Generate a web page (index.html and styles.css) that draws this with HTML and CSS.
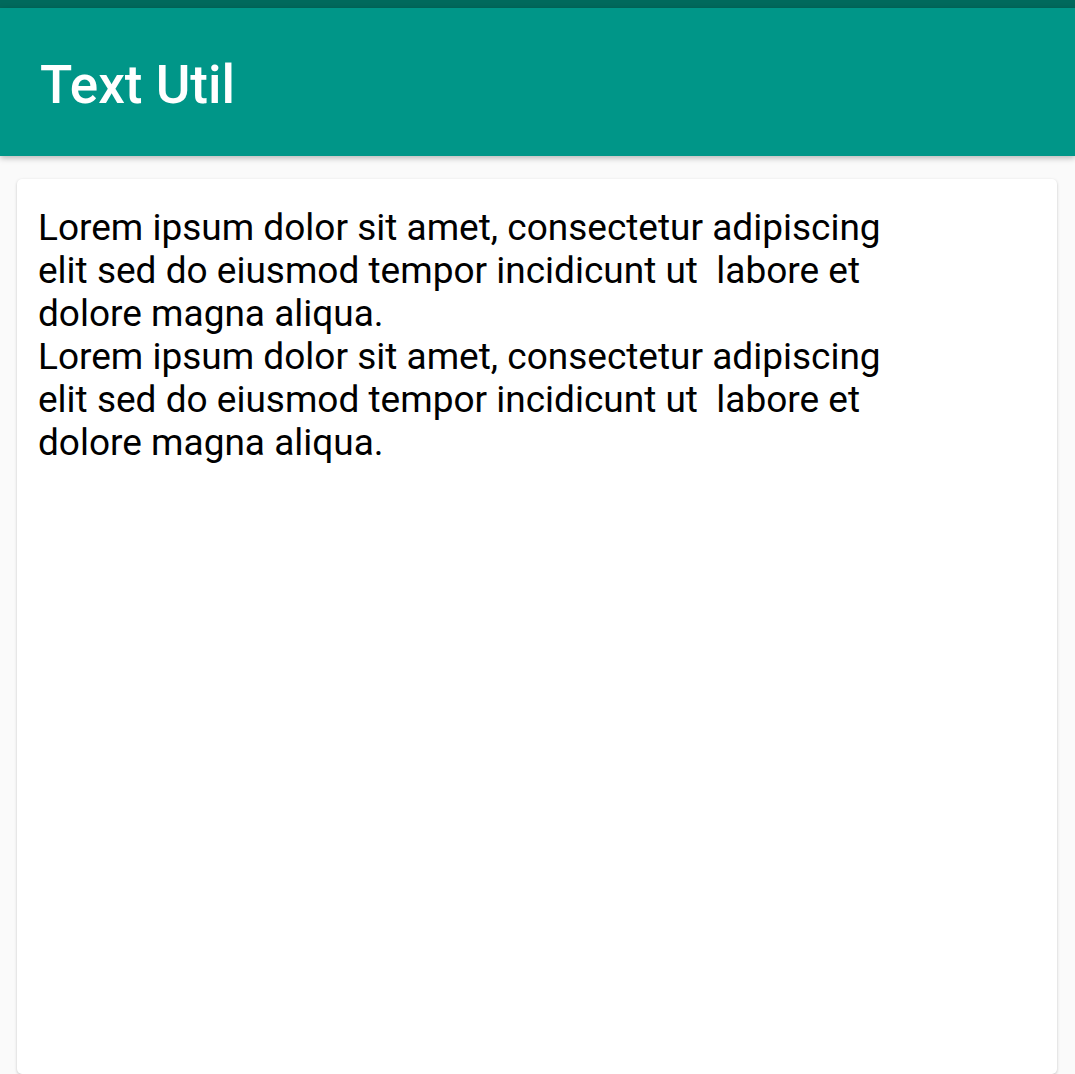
FILE: index.html
```html
<!DOCTYPE html>
<html>
<head>
<meta charset="utf-8">
<link rel="stylesheet" href="styles.css">
</head>
<body>
<div class="status"></div>
<header class="appbar"><h1 class="title">Text Util</h1></header>
<main class="content">
<div class="card"><p class="text">Lorem ipsum dolor sit amet, consectetur adipiscing
elit sed do eiusmod tempor incidicunt ut  labore et
dolore magna aliqua.
Lorem ipsum dolor sit amet, consectetur adipiscing
elit sed do eiusmod tempor incidicunt ut  labore et
dolore magna aliqua.</p></div>
</main>
</body>
</html>
```
FILE: styles.css
```css
html, body {
  margin: 0;
  padding: 0;
  height: 100%;
  overflow: hidden;
}
body {
  background: #fafafa;
  font-family: Roboto, "Liberation Sans", sans-serif;
  display: flex;
  flex-direction: column;
}
.status {
  height: 8px;
  background: #00695c;
  flex: none;
}
.appbar {
  height: 148px;
  box-sizing: border-box;
  background: #009688;
  box-shadow: 0 2px 6px rgba(0,0,0,0.28);
  display: flex;
  align-items: center;
  padding: 6px 0 0 40px;
  position: relative;
  z-index: 1;
  flex: none;
}
.title {
  margin: 0;
  color: #fff;
  font-weight: 500;
  font-size: 53px;
  line-height: 1;
}
.content {
  flex: 1;
  padding: 23px 18px 0 17px;
  display: flex;
}
.card {
  flex: 1;
  background: #fff;
  border-radius: 5px;
  box-shadow: 0 1px 3px rgba(0,0,0,0.22);
  padding: 27px 21px;
}
.text {
  margin: 0;
  white-space: pre-wrap;
  color: #000;
  font-size: 37px;
  line-height: 43px;
}
```
